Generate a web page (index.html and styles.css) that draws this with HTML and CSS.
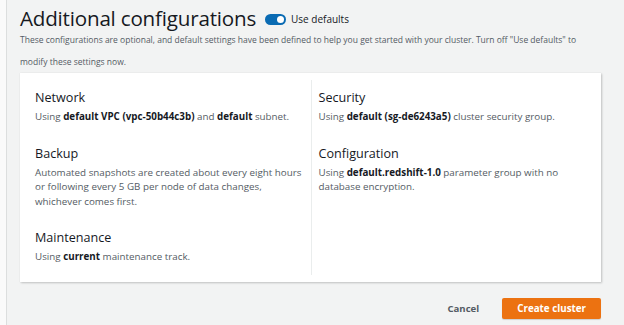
FILE: index.html
```html
<!DOCTYPE html>
<html lang="en">
  <head>
    <meta charset="UTF-8" />
    <meta name="viewport" content="width=device-width, initial-scale=1.0" />
    <title>Additional configurations</title>
    <link rel="stylesheet" href="styles.css">
  </head>
  <body>
    <div class="page">
      <div class="header">
        <h1 class="title">Additional configurations</h1>
        <label class="toggle">
          <span class="switch"><span class="knob"></span></span>
          Use defaults
        </label>
      </div>
      <p class="desc">
        These configurations are optional, and default settings have been defined to help you get started with your cluster. Turn off "Use defaults" to modify these settings now.
      </p>
      <div class="card">
        <div class="col">
          <div class="section">
            <h2>Network</h2>
            <p>Using <b>default VPC (vpc-50b44c3b)</b> and <b>default</b> subnet.</p>
          </div>
          <div class="section">
            <h2>Backup</h2>
            <p>Automated snapshots are created about every eight hours or following every 5 GB per node of data changes, whichever comes first.</p>
          </div>
          <div class="section">
            <h2>Maintenance</h2>
            <p>Using <b>current</b> maintenance track.</p>
          </div>
        </div>
        <div class="col">
          <div class="section">
            <h2>Security</h2>
            <p>Using <b>default (sg-de6243a5)</b> cluster security group.</p>
          </div>
          <div class="section">
            <h2>Configuration</h2>
            <p>Using <b>default.redshift-1.0</b> parameter group with no database encryption.</p>
          </div>
        </div>
      </div>
      <div class="footer">
        <button class="btn-link">Cancel</button>
        <button class="btn-primary">Create cluster</button>
      </div>
    </div>
  </body>
</html>
```

FILE: styles.css
```css
body {
  margin: 0;
  font-family: "Open Sans", Arial, sans-serif;
  background-color: #f2f3f3;
  color: #16191f;
}
.page {
  min-height: 325px;
  box-sizing: border-box;
  margin-left: 6px;
  border-left: 1px solid #dcdede;
  padding: 4px 23px 0 13px;
  box-shadow: -6px 0 0 #fafafa;
}
.header {
  display: flex;
  align-items: center;
  gap: 9px;
}
.title {
  font-size: 20.6px;
  font-weight: 400;
  margin: 0;
  letter-spacing: -0.2px;
  line-height: 28px;
}
.toggle {
  display: flex;
  align-items: center;
  gap: 5px;
  font-size: 10px;
  padding-top: 2px;
}
.switch {
  width: 21px;
  height: 11px;
  border-radius: 6px;
  background-color: #0a6bb3;
  position: relative;
}
.knob {
  position: absolute;
  top: 2px;
  right: 2px;
  width: 7px;
  height: 7px;
  border-radius: 50%;
  background-color: white;
}
.desc {
  font-size: 8.5px;
  line-height: 22px;
  color: #545b64;
  margin: -3px 0 0;
}
.card {
  background-color: white;
  box-shadow: 1px 1px 2px rgba(0, 0, 0, 0.2), 0 0 1px rgba(0, 0, 0, 0.1);
  display: grid;
  grid-template-columns: 1fr 1fr;
  padding: 7px 0;
}
.col {
  padding: 8px 2px 10px 15px;
}
.col + .col {
  border-left: 1px solid #eaeded;
  padding-left: 7px;
  padding-right: 15px;
}
.section {
  margin-bottom: 19px;
}
.section:last-child {
  margin-bottom: 0;
}
.section h2 {
  font-size: 12.6px;
  font-weight: 400;
  margin: 0 0 3px;
  line-height: 19px;
}
.section p {
  font-size: 9.8px;
  line-height: 14.5px;
  color: #545b64;
  margin: 0;
}
.section b {
  color: #16191f;
  font-weight: 700;
}
.footer {
  display: flex;
  justify-content: flex-end;
  align-items: center;
  gap: 23px;
  margin-top: 16px;
}
button {
  font-family: inherit;
  font-weight: 700;
  border: none;
  cursor: pointer;
}
.btn-link {
  background: none;
  color: #545b64;
  padding: 0;
  font-size: 9.6px;
}
.btn-primary {
  background-color: #ec7211;
  color: white;
  border-radius: 2px;
  height: 21px;
  padding: 0 15px;
  font-size: 9.8px;
  box-shadow: 0 1px 1px rgba(0, 0, 0, 0.15);
}
```
